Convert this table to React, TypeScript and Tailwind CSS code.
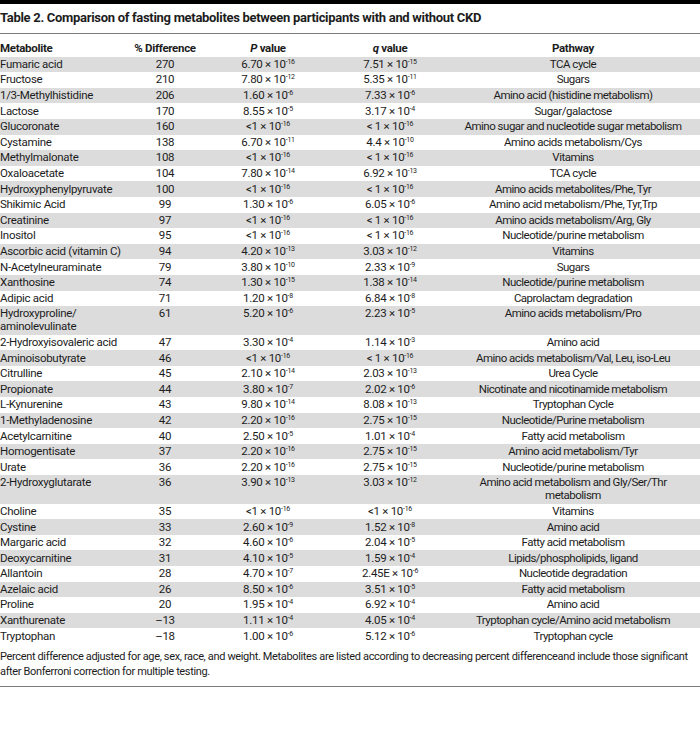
type Val = [string, string]
type Row = [string, string, Val, Val, string]

const rows: Row[] = [
  ["Fumaric acid", "270", ["6.70", "16"], ["7.51", "15"], "TCA cycle"],
  ["Fructose", "210", ["7.80", "12"], ["5.35", "11"], "Sugars"],
  ["1/3-Methylhistidine", "206", ["1.60", "6"], ["7.33", "6"], "Amino acid (histidine metabolism)"],
  ["Lactose", "170", ["8.55", "5"], ["3.17", "4"], "Sugar/galactose"],
  ["Glucoronate", "160", ["<1", "16"], ["< 1", "16"], "Amino sugar and nucleotide sugar metabolism"],
  ["Cystamine", "138", ["6.70", "11"], ["4.4", "10"], "Amino acids metabolism/Cys"],
  ["Methylmalonate", "108", ["<1", "16"], ["< 1", "16"], "Vitamins"],
  ["Oxaloacetate", "104", ["7.80", "14"], ["6.92", "13"], "TCA cycle"],
  ["Hydroxyphenylpyruvate", "100", ["<1", "16"], ["< 1", "16"], "Amino acids metabolites/Phe, Tyr"],
  ["Shikimic Acid", "99", ["1.30", "6"], ["6.05", "6"], "Amino acid metabolism/Phe, Tyr,Trp"],
  ["Creatinine", "97", ["<1", "16"], ["< 1", "16"], "Amino acids metabolism/Arg, Gly"],
  ["Inositol", "95", ["<1", "16"], ["< 1", "16"], "Nucleotide/purine metabolism"],
  ["Ascorbic acid (vitamin C)", "94", ["4.20", "13"], ["3.03", "12"], "Vitamins"],
  ["N-Acetylneuraminate", "79", ["3.80", "10"], ["2.33", "9"], "Sugars"],
  ["Xanthosine", "74", ["1.30", "15"], ["1.38", "14"], "Nucleotide/purine metabolism"],
  ["Adipic acid", "71", ["1.20", "8"], ["6.84", "8"], "Caprolactam degradation"],
  ["Hydroxyproline/\naminolevulinate", "61", ["5.20", "6"], ["2.23", "5"], "Amino acids metabolism/Pro"],
  ["2-Hydroxyisovaleric acid", "47", ["3.30", "4"], ["1.14", "3"], "Amino acid"],
  ["Aminoisobutyrate", "46", ["<1", "16"], ["< 1", "16"], "Amino acids metabolism/Val, Leu, iso-Leu"],
  ["Citrulline", "45", ["2.10", "14"], ["2.03", "13"], "Urea Cycle"],
  ["Propionate", "44", ["3.80", "7"], ["2.02", "6"], "Nicotinate and nicotinamide metabolism"],
  ["L-Kynurenine", "43", ["9.80", "14"], ["8.08", "13"], "Tryptophan Cycle"],
  ["1-Methyladenosine", "42", ["2.20", "16"], ["2.75", "15"], "Nucleotide/Purine metabolism"],
  ["Acetylcarnitine", "40", ["2.50", "5"], ["1.01", "4"], "Fatty acid metabolism"],
  ["Homogentisate", "37", ["2.20", "16"], ["2.75", "15"], "Amino acid metabolism/Tyr"],
  ["Urate", "36", ["2.20", "16"], ["2.75", "15"], "Nucleotide/purine metabolism"],
  ["2-Hydroxyglutarate", "36", ["3.90", "13"], ["3.03", "12"], "Amino acid metabolism and Gly/Ser/Thr\nmetabolism"],
  ["Choline", "35", ["<1", "16"], ["<1", "16"], "Vitamins"],
  ["Cystine", "33", ["2.60", "9"], ["1.52", "8"], "Amino acid"],
  ["Margaric acid", "32", ["4.60", "6"], ["2.04", "5"], "Fatty acid metabolism"],
  ["Deoxycarnitine", "31", ["4.10", "5"], ["1.59", "4"], "Lipids/phospholipids, ligand"],
  ["Allantoin", "28", ["4.70", "7"], ["2.45E", "6"], "Nucleotide degradation"],
  ["Azelaic acid", "26", ["8.50", "6"], ["3.51", "5"], "Fatty acid metabolism"],
  ["Proline", "20", ["1.95", "4"], ["6.92", "4"], "Amino acid"],
  ["Xanthurenate", "–13", ["1.11", "4"], ["4.05", "4"], "Tryptophan cycle/Amino acid metabolism"],
  ["Tryptophan", "–18", ["1.00", "6"], ["5.12", "6"], "Tryptophan cycle"],
]

function Sci({ v }: { v: Val }) {
  return (
    <span>
      {v[0]} × 10
      <span className="relative -top-[4px] text-[7px] leading-none">-{v[1]}</span>
    </span>
  )
}

export default function App() {
  return (
    <div className="w-[700px] h-[745px] bg-white text-[#1c1c1c] font-['Roboto',sans-serif] text-[11.5px] tracking-[-0.3px]">
      <div className="h-[4px] bg-black"></div>
      <h1 className="pt-[7px] pb-[8px] text-[13px] leading-[14px] font-bold tracking-[-0.3px]">
        Table 2. Comparison of fasting metabolites between participants with and without CKD
      </h1>
      <div className="h-px bg-[#7a7a7a]"></div>

      <table className="table-fixed w-[700px] mt-[7px] border-collapse leading-[13px]">
        <colgroup>
          <col className="w-[128px]" />
          <col className="w-[74px]" />
          <col className="w-[132px]" />
          <col className="w-[112px]" />
          <col className="w-[254px]" />
        </colgroup>
        <thead>
          <tr className="font-bold">
            <th className="py-[1.3px] text-left font-bold">Metabolite</th>
            <th className="py-[1.3px] text-center font-bold">% Difference</th>
            <th className="py-[1.3px] text-center font-bold">
              <i>P</i> value
            </th>
            <th className="py-[1.3px] text-center font-bold">
              <i>q</i> value
            </th>
            <th className="py-[1.3px] text-center font-bold">Pathway</th>
          </tr>
        </thead>
        <tbody>
          {rows.map((r, i) => (
            <tr key={r[0]} className={i % 2 === 0 ? "bg-[#dcdcdc]" : "bg-white"}>
              <td className="py-[1.3px] align-top whitespace-pre-line">{r[0]}</td>
              <td className="py-[1.3px] align-top text-center">{r[1]}</td>
              <td className="py-[1.3px] align-top text-center">
                <Sci v={r[2]} />
              </td>
              <td className="py-[1.3px] align-top text-center">
                <Sci v={r[3]} />
              </td>
              <td className="py-[1.3px] align-top text-center whitespace-pre-line tracking-[-0.5px]">{r[4]}</td>
            </tr>
          ))}
        </tbody>
      </table>

      <p className="mt-[5px] leading-[15px] text-[11px] tracking-[-0.35px] whitespace-nowrap">
        Percent difference adjusted for age, sex, race, and weight. Metabolites are listed according to decreasing
        percent differenceand include those significant
        <br />
        after Bonferroni correction for multiple testing.
      </p>
      <div className="mt-[7px] h-px bg-[#7a7a7a]"></div>
    </div>
  )
}
